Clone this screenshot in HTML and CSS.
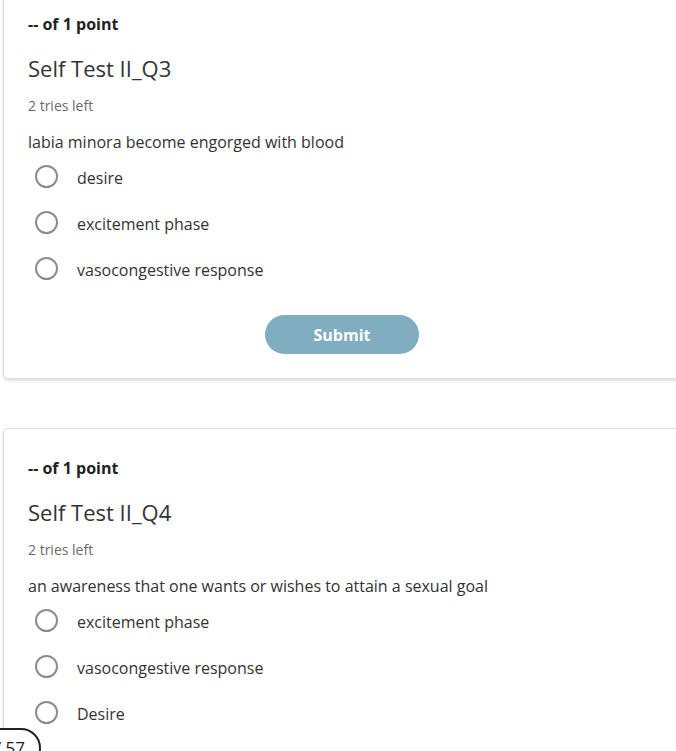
FILE: index.html
```html
<!DOCTYPE html>
<html>
<head>
<meta charset="utf-8">
<link rel="stylesheet" href="styles.css">
</head>
<body>
<div class="page">
  <section class="card card-first">
    <div class="points">-- of 1 point</div>
    <h2 class="title">Self Test II_Q3</h2>
    <div class="tries">2 tries left</div>
    <p class="question">labia minora become engorged with blood</p>
    <ul class="options">
      <li class="option"><span class="radio"></span><span class="label">desire</span></li>
      <li class="option"><span class="radio"></span><span class="label">excitement phase</span></li>
      <li class="option"><span class="radio"></span><span class="label">vasocongestive response</span></li>
    </ul>
    <div class="actions"><button class="submit">Submit</button></div>
  </section>
  <section class="card">
    <div class="points">-- of 1 point</div>
    <h2 class="title">Self Test II_Q4</h2>
    <div class="tries">2 tries left</div>
    <p class="question">an awareness that one wants or wishes to attain a sexual goal</p>
    <ul class="options">
      <li class="option"><span class="radio"></span><span class="label">excitement phase</span></li>
      <li class="option"><span class="radio"></span><span class="label">vasocongestive response</span></li>
      <li class="option"><span class="radio"></span><span class="label">Desire</span></li>
    </ul>
    <div class="actions"><button class="submit">Submit</button></div>
  </section>
</div>
<div class="counter">1 / 57</div>
</body>
</html>
```
FILE: styles.css
```css
html, body {
  margin: 0;
  padding: 0;
  background: #ffffff;
  overflow: hidden;
  height: 751px;
}
body {
  font-family: "Open Sans", "Liberation Sans", sans-serif;
  color: #333333;
  position: relative;
}
.page {
  padding-left: 3px;
  width: 760px;
  display: flex;
  flex-direction: column;
  gap: 49px;
}
.card {
  background: #fff;
  border: 1px solid #dcdcdc;
  border-radius: 5px;
  box-shadow: 0 2px 3px rgba(0,0,0,0.12);
  padding: 27px 24px 24px 24px;
}
.card-first {
  margin-top: -16px;
}
.points {
  font-size: 16px;
  font-weight: 700;
  line-height: 24px;
  color: #222;
}
.title {
  margin: 16px 0 0 0;
  font-size: 22px;
  font-weight: 400;
  line-height: 32px;
  color: #333;
}
.tries {
  margin-top: 12px;
  font-size: 14px;
  line-height: 20px;
  color: #6b6b6b;
}
.question {
  margin: 14px 0 0 0;
  font-size: 16px;
  line-height: 24px;
  color: #333;
}
.options {
  list-style: none;
  margin: 1px 0 0 0;
  padding: 0;
}
.option {
  height: 46px;
  display: flex;
  align-items: center;
  font-size: 16px;
  color: #333;
}
.radio {
  box-sizing: border-box;
  width: 23px;
  height: 23px;
  border: 2px solid #8c8c8c;
  border-radius: 50%;
  margin-left: 7px;
  margin-right: 19px;
  margin-top: -3px;
  flex: none;
}
.label {
  line-height: 24px;
}
.actions {
  width: 628px;
  display: flex;
  justify-content: center;
  margin-top: 22px;
}
.submit {
  width: 154px;
  height: 39px;
  border: none;
  border-radius: 20px;
  background: #80adc0;
  color: #fff;
  font-family: "Open Sans", "Liberation Sans", sans-serif;
  font-size: 16px;
  font-weight: 700;
}
.counter {
  position: absolute;
  left: -40px;
  top: 728px;
  width: 81px;
  height: 40px;
  box-sizing: border-box;
  border: 2px solid #222;
  border-radius: 20px;
  background: #fff;
  font-size: 17px;
  line-height: 36px;
  text-align: right;
  padding-right: 14px;
  color: #222;
}
```
